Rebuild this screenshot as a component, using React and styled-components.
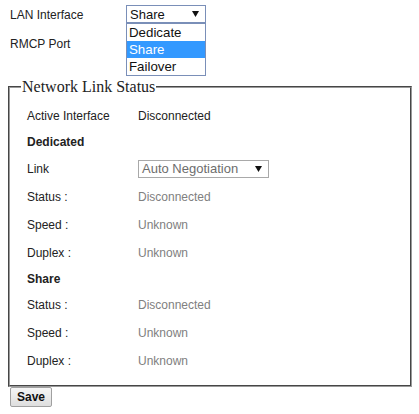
import React from "react";
import styled, { createGlobalStyle } from "styled-components";

const GlobalStyle = createGlobalStyle`
  body {
    margin: 0;
    background: #fff;
    font-family: Arial, "Liberation Sans", sans-serif;
    font-size: 12px;
    color: #222;
  }
`;

const dedicatedRows = [
  { label: "Status :", value: "Disconnected" },
  { label: "Speed :", value: "Unknown" },
  { label: "Duplex :", value: "Unknown" },
];

const shareRows = [
  { label: "Status :", value: "Disconnected" },
  { label: "Speed :", value: "Unknown" },
  { label: "Duplex :", value: "Unknown" },
];

function Arrow() {
  return (
    <svg width="7" height="6" viewBox="0 0 7 6">
      <path d="M0 0 L7 0 L3.5 6 Z" fill="#111" />
    </svg>
  );
}

function App() {
  return (
    <>
      <GlobalStyle />
      <Page>
        <TopGrid>
          <Label>LAN Interface</Label>
          <SelectWrap>
            <Select width="80px">
              <span>Share</span>
              <Arrow />
            </Select>
            <OptionList>
              <Option>Dedicate</Option>
              <Option selected>Share</Option>
              <Option>Failover</Option>
            </OptionList>
          </SelectWrap>
          <Label>RMCP Port</Label>
          <div />
        </TopGrid>

        <Fieldset>
          <Legend>Network Link Status</Legend>
          <StatusGrid>
            <Row>
              <Label>Active Interface</Label>
              <Value>Disconnected</Value>
            </Row>
            <Heading>Dedicated</Heading>
            <Row height="29px">
              <Label>Link</Label>
              <div>
                <Select width="131px" muted>
                  <span>Auto Negotiation</span>
                  <Arrow />
                </Select>
              </div>
            </Row>
            {dedicatedRows.map((row) => (
              <Row key={"d" + row.label}>
                <Label>{row.label}</Label>
                <Value muted>{row.value}</Value>
              </Row>
            ))}
            <Heading>Share</Heading>
            {shareRows.map((row) => (
              <Row key={"s" + row.label}>
                <Label>{row.label}</Label>
                <Value muted>{row.value}</Value>
              </Row>
            ))}
          </StatusGrid>
        </Fieldset>

        <SaveButton>Save</SaveButton>
      </Page>
    </>
  );
}

const Page = styled.div`
  width: 419px;
  padding: 0 0 0 8px;
  box-sizing: border-box;
`;

const TopGrid = styled.div`
  display: grid;
  grid-template-columns: 116px 1fr;
  grid-auto-rows: 29px;
  align-items: center;
  padding-left: 2px;
`;

const Label = styled.div`
  color: #222;
  font-size: 12px;
`;

const Value = styled.div`
  color: ${(p) => (p.muted ? "#808080" : "#222")};
  font-size: 12px;
`;

const SelectWrap = styled.div`
  position: relative;
  height: 18px;
  margin-top: -1px;
`;

const Select = styled.div`
  width: ${(p) => p.width};
  height: 18px;
  box-sizing: border-box;
  border: 1px solid ${(p) => (p.muted ? "#a9a9a9" : "#7a8fb8")};
  background: #fff;
  display: flex;
  align-items: center;
  justify-content: space-between;
  padding: 0 6px 0 3px;
  font-size: 13px;
  color: ${(p) => (p.muted ? "#6d6d6d" : "#111")};
`;

const OptionList = styled.div`
  position: absolute;
  top: 18px;
  left: 0;
  width: 80px;
  box-sizing: border-box;
  border: 1px solid #7a8fb8;
  background: #fff;
  z-index: 2;
`;

const Option = styled.div`
  height: 17px;
  line-height: 17px;
  padding-left: 2px;
  font-size: 13.3px;
  color: ${(p) => (p.selected ? "#fff" : "#111")};
  background: ${(p) => (p.selected ? "#3399ff" : "transparent")};
`;

const Fieldset = styled.fieldset`
  margin: 20px 0 0 0;
  width: 404px;
  box-sizing: border-box;
  border: 2px groove #9a9a9a;
  padding: 6px 17px 10px 17px;
`;

const Legend = styled.legend`
  font-family: "Liberation Serif", "Times New Roman", serif;
  font-size: 16px;
  color: #222;
  padding: 0 1px;
  margin-left: -6px;
`;

const StatusGrid = styled.div`
  display: flex;
  flex-direction: column;
`;

const Row = styled.div`
  display: grid;
  grid-template-columns: 111px 1fr;
  align-items: center;
  height: ${(p) => p.height || "28px"};
`;

const Heading = styled.div`
  height: 24px;
  display: flex;
  align-items: center;
  font-weight: bold;
  font-size: 12px;
  color: #222;
`;

const SaveButton = styled.button`
  margin: 0 0 0 2px;
  height: 20px;
  padding: 0 6px;
  font-family: Arial, "Liberation Sans", sans-serif;
  font-size: 12px;
  font-weight: bold;
  color: #111;
  border: 1px solid #a0a0a0;
  border-radius: 2px;
  background: linear-gradient(#f6f6f6, #dedede);
`;

export default App;
